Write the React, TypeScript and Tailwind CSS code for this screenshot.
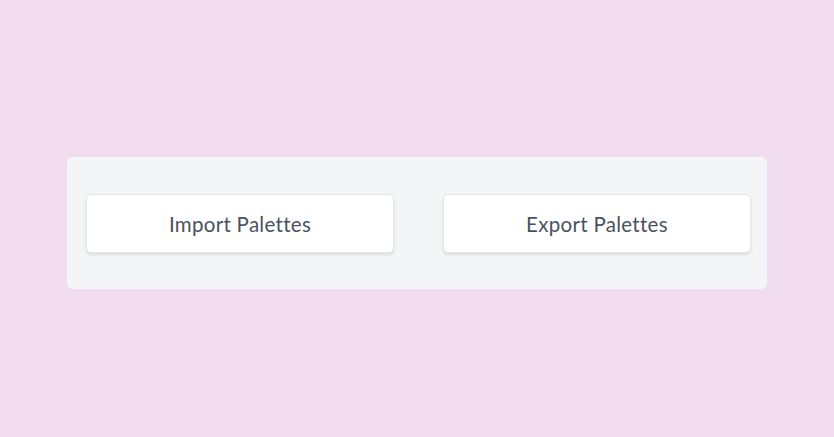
import React from 'react';

const buttons = ['Import Palettes', 'Export Palettes'];

export default function App() {
  return (
    <div className="min-h-screen w-full bg-[#f2dcf0] flex items-center justify-center pt-[9px]">
      {/* Palette actions panel */}
      <div className="w-[700px] h-[132px] rounded-md bg-[#f4f5f7] pl-[19px] pr-[16px] flex items-center gap-[49px]">
        {buttons.map((label) => (
          <button
            key={label}
            type="button"
            className="flex-1 h-[59px] pt-[2px] rounded-[5px] bg-white border border-[#e3e5e9] shadow-[0_2px_3px_rgba(0,0,0,0.1)] text-[#4a5260] text-[20.5px] font-['Lato',_'Open_Sans',_sans-serif] tracking-[0.3px]"
          >
            {label}
          </button>
        ))}
      </div>
    </div>
  );
}
